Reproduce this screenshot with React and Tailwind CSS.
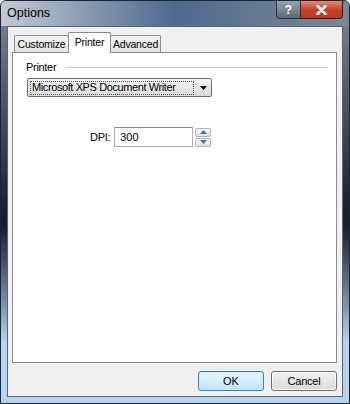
const ui = { fontFamily: '"Liberation Sans", Arial, sans-serif' };

function Tab({ label, active, width }) {
  if (active) {
    return (
      <div
        className="relative z-10 -mx-[1px] flex h-[21px] items-start justify-center rounded-t-[2px] border border-b-0 border-[#898c95] bg-white pt-[2px] text-[10.5px] tracking-[-0.2px] text-black"
        style={{ width }}
      >
        {label}
      </div>
    );
  }
  return (
    <div
      className="flex h-[18px] items-center justify-center rounded-t-[2px] border border-b-0 border-[#898c95] bg-gradient-to-b from-[#f3f3f3] to-[#e3e3e3] text-[10.5px] tracking-[-0.2px] text-black"
      style={{ width }}
    >
      {label}
    </div>
  );
}

function SpinButton({ up }) {
  return (
    <div className="flex h-[9px] w-[16px] items-center justify-center rounded-[2px] border border-[#b4b7bf] bg-gradient-to-b from-[#f6f6f6] to-[#dfe2e6]">
      <svg width="7" height="4" viewBox="0 0 7 4">
        {up ? (
          <path d="M0 4 L3.5 0 L7 4 Z" fill="#4a6fb6" />
        ) : (
          <path d="M0 0 L3.5 4 L7 0 Z" fill="#4a6fb6" />
        )}
      </svg>
    </div>
  );
}

export default function App() {
  return (
    <div
      className="relative flex h-[404px] w-[350px] flex-col overflow-hidden rounded-t-[6px] border border-[#1c2330] bg-gradient-to-b from-[#7f8c9a] via-[#151c2a] via-55% to-[#b5d3f3] to-85%"
      style={ui}
    >
      {/* title bar */}
      <div className="flex h-[25px] shrink-0 items-start bg-gradient-to-r from-[#c2cbd4] via-[#4f6a8e] to-[#7c8896]">
        <span className="ml-[6px] mt-[6px] text-[12.5px] leading-none text-black">Options</span>
        <div className="ml-auto mr-[6px] flex">
          <div className="flex h-[18px] w-[25px] items-center justify-center rounded-bl-[4px] border border-t-0 border-[#2b333d] bg-gradient-to-b from-[#9aa4b0] to-[#5f6a78] text-[12px] font-bold leading-none text-white">
            ?
          </div>
          <div className="flex h-[18px] w-[42px] items-center justify-center rounded-br-[4px] border border-l-0 border-t-0 border-[#3a1810] bg-gradient-to-b from-[#e08a74] via-[#c8432a] to-[#b83a22]">
            <svg width="11" height="10" viewBox="0 0 11 10">
              <path d="M1.5 1 L9.5 9 M9.5 1 L1.5 9" stroke="white" strokeWidth="2.6" strokeLinecap="round" />
            </svg>
          </div>
        </div>
      </div>

      {/* client area */}
      <div className="mx-[6px] flex h-[371px] shrink-0 flex-col border border-[#5b6570] bg-[#f0f0f0] px-[4px]">
        {/* tabs */}
        <div className="mt-[5px] flex h-[21px] items-end pl-[2px]">
          <Tab label="Customize" width={55} />
          <Tab label="Printer" width={43} active />
          <Tab label="Advanced" width={51} />
        </div>

        {/* tab panel */}
        <div className="-mt-[1px] flex h-[311px] w-[325px] flex-col border border-[#898c95] bg-white">
          <div className="mt-[8px] flex items-center pl-[13px] pr-[9px]">
            <span className="text-[11px] leading-[13px] tracking-[-0.3px] text-black">Printer</span>
            <div className="ml-[10px] h-[1px] flex-1 bg-[#c4c8cc]" />
          </div>

          <div className="ml-[14px] mt-[4px] flex h-[19px] w-[185px] items-center rounded-[2px] border border-[#707070] bg-gradient-to-b from-[#f4f4f4] to-[#dcdcdc] pl-[2px] pr-[4px]">
            <span className="flex h-[14px] w-[164px] items-center whitespace-nowrap border border-dotted border-[#555] pl-[1px] text-[11px] leading-none tracking-[-0.4px] text-black">
              Microsoft XPS Document Writer
            </span>
            <svg className="ml-auto" width="7" height="4" viewBox="0 0 7 4">
              <path d="M0 0 L7 0 L3.5 4 Z" fill="black" />
            </svg>
          </div>

          <div className="ml-[77px] mt-[30px] flex items-center">
            <span className="mr-[4px] text-[11px] tracking-[-0.3px] text-black">DPI:</span>
            <div className="flex h-[20px] w-[79px] items-center border border-[#abadb3] border-t-[#8e8f8f] bg-white pl-[5px] text-[11px] text-black">
              300
            </div>
            <div className="ml-[2px] flex flex-col gap-[1px]">
              <SpinButton up />
              <SpinButton />
            </div>
          </div>
        </div>

        {/* buttons */}
        <div className="mt-[8px] flex justify-end gap-[7px] pr-[1px]">
          <button className="h-[20px] w-[66px] rounded-[3px] border border-[#3c7fb1] bg-gradient-to-b from-[#eaf6fd] to-[#bee6fd] text-[11px] text-black shadow-[inset_0_0_0_1px_#c9ecfd]">
            OK
          </button>
          <button className="h-[20px] w-[66px] rounded-[3px] border border-[#707070] bg-gradient-to-b from-[#f2f2f2] to-[#dadada] text-[11px] tracking-[-0.2px] text-black shadow-[inset_0_0_0_1px_#fbfbfb]">
            Cancel
          </button>
        </div>
      </div>
    </div>
  );
}
